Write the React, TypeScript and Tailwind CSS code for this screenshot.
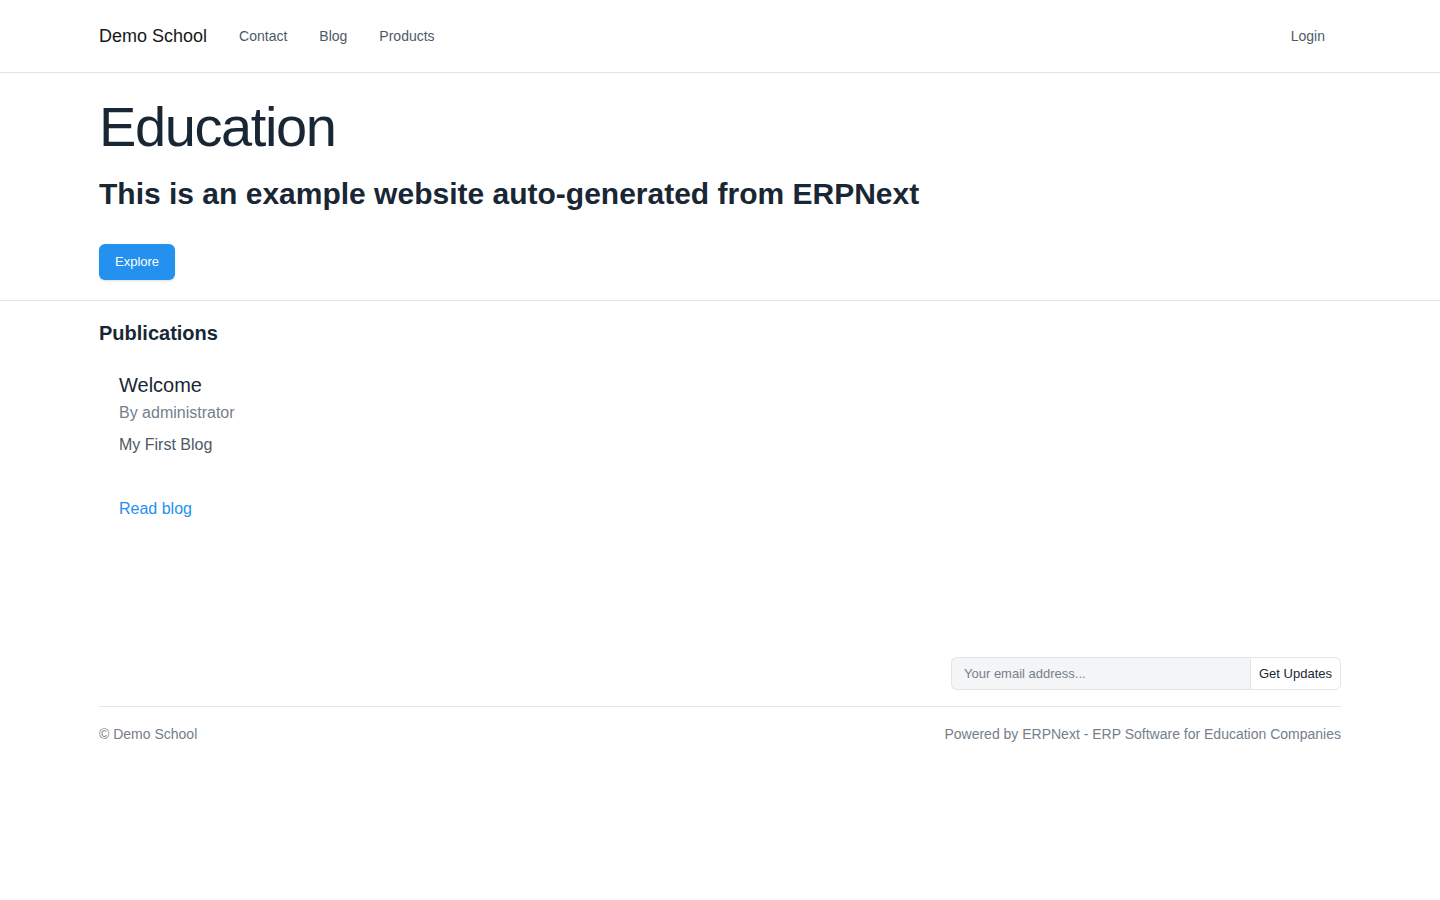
import React from "react";

const navLinks = ["Contact", "Blog", "Products"];

function Header() {
  return (
    <header className="border-b border-[#e2e2e2] py-4">
      <nav className="mx-auto flex h-10 max-w-[1320px] items-center px-[39px]">
        <a href="#" className="mr-8 text-lg text-[#171717]">
          Demo School
        </a>
        <ul className="flex flex-1 gap-8 text-sm text-[#4c5a67]">
          {navLinks.map((label) => (
            <li key={label}>
              <a href="#">{label}</a>
            </li>
          ))}
        </ul>
        <a href="#" className="px-4 text-sm text-[#4c5a67]">
          Login
        </a>
      </nav>
    </header>
  );
}

function Hero() {
  return (
    <section className="border-b border-[#e2e2e2] py-5">
      <div className="mx-auto max-w-[1320px] px-[39px]">
        <h1 className="text-[56px] leading-[67px] tracking-tight text-[#192734]">Education</h1>
        <h2 className="mt-4 text-3xl font-bold text-[#192734]">
          This is an example website auto-generated from ERPNext
        </h2>
        <button
          type="button"
          className="mt-8 block h-9 rounded-md bg-[#2490ef] px-4 text-[13px] text-white shadow-sm"
        >
          Explore
        </button>
      </div>
    </section>
  );
}

function Publications() {
  return (
    <section className="mx-auto max-w-[1320px] px-[39px] pt-5">
      <h3 className="text-xl leading-6 font-bold text-[#192734]">Publications</h3>
      <article className="p-5 pt-7 text-base">
        <h4 className="text-xl leading-6 text-[#192734]">Welcome</h4>
        <p className="mt-1 leading-6 text-[#74808b]">By administrator</p>
        <p className="mt-2 leading-6 text-[#4c5a67]">My First Blog</p>
        <a href="#" className="mt-10 inline-block leading-6 text-[#2490ef]">
          Read blog
        </a>
      </article>
    </section>
  );
}

function Footer() {
  return (
    <footer className="mx-auto mt-29 max-w-[1320px] px-[39px]">
      <form className="ml-auto flex h-[33px] w-[390px]" onSubmit={(e) => e.preventDefault()}>
        <input
          type="email"
          aria-label="Your email address"
          placeholder="Your email address..."
          className="min-w-0 flex-1 rounded-l-md border border-r-0 border-[#e2e6e9] bg-[#f4f5f6] px-3 text-[13px] text-[#192734] placeholder:text-[#74808b]"
        />
        <button
          type="submit"
          className="rounded-r-md border border-[#e2e6e9] bg-white px-2 text-[13px] text-[#192734]"
        >
          Get Updates
        </button>
      </form>
      <div className="mt-4 flex justify-between border-t border-[#e2e6e9] pt-4 text-sm leading-[22px] text-[#74808b]">
        <p>© Demo School</p>
        <p>Powered by ERPNext - ERP Software for Education Companies</p>
      </div>
    </footer>
  );
}

export default function App() {
  return (
    <div className="bg-white font-['Liberation_Sans',Arial,sans-serif]">
      <Header />
      <main>
        <Hero />
        <Publications />
      </main>
      <Footer />
    </div>
  );
}
